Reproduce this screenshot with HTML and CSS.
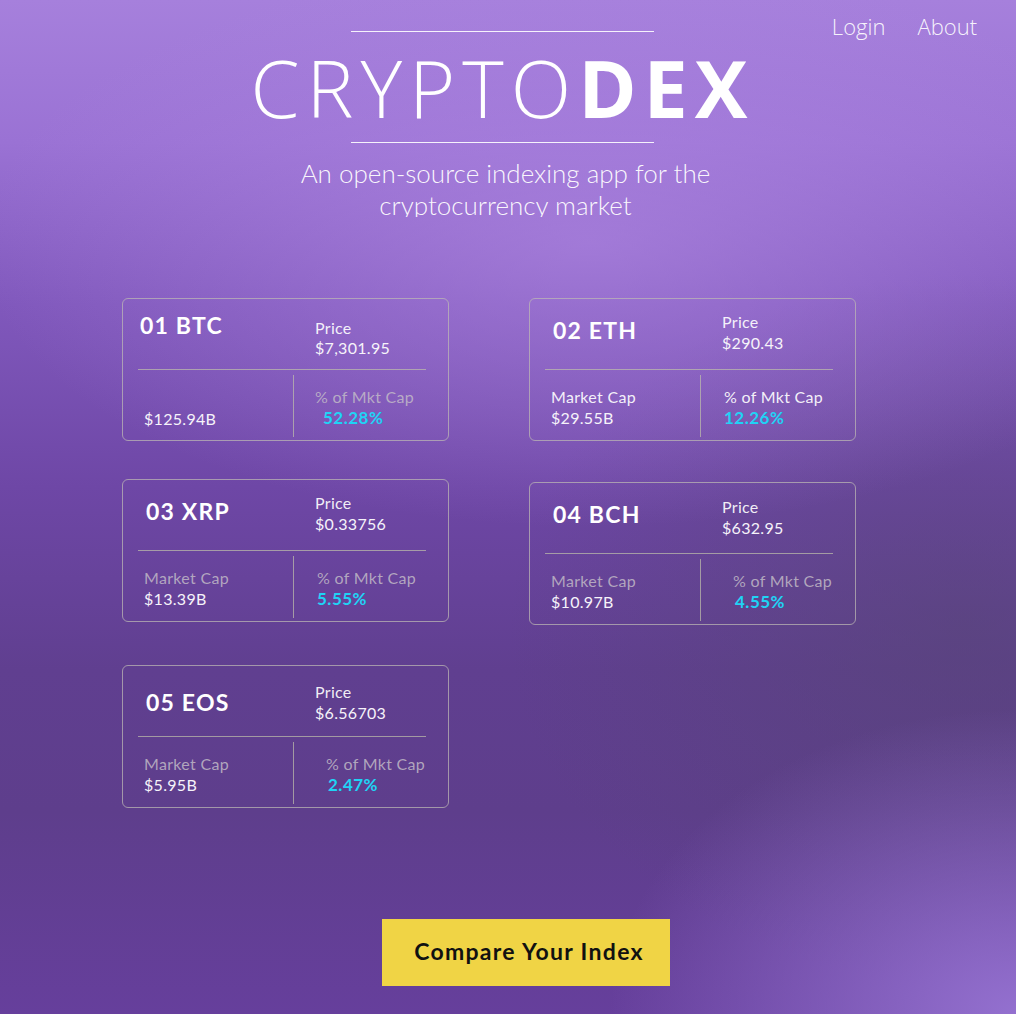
FILE: index.html
```html
<!DOCTYPE html>
<html lang="en">
<head>
<meta charset="utf-8">
<title>CryptoDex</title>
<link rel="stylesheet" href="styles.css">
</head>
<body>
<div class="page">
  <header class="top">
    <nav class="nav">
      <a class="nav-link" href="#">Login</a>
      <a class="nav-link" href="#">About</a>
    </nav>
    <div class="brand">
      <div class="rule"></div>
      <h1 class="logo"><span class="logo-light">CRYPTO</span><span class="logo-bold">DEX</span></h1>
      <div class="rule"></div>
      <p class="tagline">An open-source indexing app for the<br>cryptocurrency market</p>
    </div>
  </header>

  <main class="cards">
    <div class="card card--btc">
      <div class="card-top">
        <div class="sym">01 BTC</div>
        <div class="price"><div class="lbl">Price</div><div class="val">$7,301.95</div></div>
      </div>
      <div class="card-bottom">
        <div class="cell"><div class="lbl muted">&nbsp;</div><div class="val">$125.94B</div></div>
        <div class="cell cell-pct"><div class="lbl muted">% of Mkt Cap</div><div class="pct">52.28%</div></div>
      </div>
    </div>

    <div class="card card--eth">
      <div class="card-top">
        <div class="sym">02 ETH</div>
        <div class="price"><div class="lbl">Price</div><div class="val">$290.43</div></div>
      </div>
      <div class="card-bottom">
        <div class="cell"><div class="lbl">Market Cap</div><div class="val">$29.55B</div></div>
        <div class="cell cell-pct"><div class="lbl">% of Mkt Cap</div><div class="pct">12.26%</div></div>
      </div>
    </div>

    <div class="card card--xrp">
      <div class="card-top">
        <div class="sym">03 XRP</div>
        <div class="price"><div class="lbl">Price</div><div class="val">$0.33756</div></div>
      </div>
      <div class="card-bottom">
        <div class="cell"><div class="lbl muted">Market Cap</div><div class="val">$13.39B</div></div>
        <div class="cell cell-pct"><div class="lbl muted">% of Mkt Cap</div><div class="pct">5.55%</div></div>
      </div>
    </div>

    <div class="card card--bch">
      <div class="card-top">
        <div class="sym">04 BCH</div>
        <div class="price"><div class="lbl">Price</div><div class="val">$632.95</div></div>
      </div>
      <div class="card-bottom">
        <div class="cell"><div class="lbl muted">Market Cap</div><div class="val">$10.97B</div></div>
        <div class="cell cell-pct cell-pct--wide"><div class="lbl muted">% of Mkt Cap</div><div class="pct">4.55%</div></div>
      </div>
    </div>

    <div class="card card--eos">
      <div class="card-top">
        <div class="sym">05 EOS</div>
        <div class="price"><div class="lbl">Price</div><div class="val">$6.56703</div></div>
      </div>
      <div class="card-bottom">
        <div class="cell"><div class="lbl muted">Market Cap</div><div class="val">$5.95B</div></div>
        <div class="cell cell-pct cell-pct--wide"><div class="lbl muted">% of Mkt Cap</div><div class="pct">2.47%</div></div>
      </div>
    </div>
  </main>

  <footer class="actions">
    <button class="cta" type="button">Compare Your Index</button>
  </footer>
</div>
</body>
</html>
```
FILE: styles.css
```css
* { box-sizing: border-box; }

html, body {
  margin: 0;
  padding: 0;
  height: 100%;
}

body {
  overflow: hidden;
  font-family: Lato, "Open Sans", "Liberation Sans", sans-serif;
  color: #f4f1f8;
  background:
    radial-gradient(ellipse 40% 30% at 100% 100%, rgba(150, 115, 210, 0.95), rgba(150, 115, 210, 0) 100%),
    radial-gradient(ellipse 60% 28% at 58% 24%, rgba(178, 138, 228, 0.6), rgba(178, 138, 228, 0) 100%),
    radial-gradient(ellipse 45% 35% at 95% 62%, rgba(85, 70, 115, 0.55), rgba(85, 70, 115, 0) 100%),
    linear-gradient(180deg, #a680dc 0%, #9a72d4 14%, #8058bc 30%, #6e47a6 48%, #603f90 66%, #5e3e8c 80%, #663f9c 100%);
  background-color: #6a44a0;
}

.page {
  height: 1014px;
  display: flex;
  flex-direction: column;
}

/* ---------- header ---------- */
.top {
  display: grid;
}

.nav,
.brand {
  grid-area: 1 / 1;
}

.nav {
  justify-self: end;
  align-self: start;
  display: flex;
  gap: 32px;
  padding: 11px 39px 0 0;
  z-index: 1;
}

.nav-link {
  font-family: "Open Sans", sans-serif;
  font-weight: 300;
  font-size: 22px;
  line-height: 30px;
  color: rgba(255, 255, 255, 0.92);
  text-decoration: none;
}

.brand {
  display: flex;
  flex-direction: column;
  align-items: center;
  padding: 31px 12px 0 0;
}

.rule {
  width: 303px;
  height: 1px;
  background: rgba(255, 255, 255, 0.9);
}

.logo {
  margin: 16px 0 15px 1px;
  font-family: "Open Sans", sans-serif;
  font-size: 79px;
  line-height: 79px;
  letter-spacing: 7px;
  color: #ffffff;
  font-weight: 300;
}

.logo-light { font-weight: 300; }
.logo-bold { font-weight: 700; }

.tagline {
  margin: 14px 0 0 7px;
  height: 60px;
  overflow: hidden;
  font-family: Lato, sans-serif;
  font-weight: 300;
  font-size: 26px;
  line-height: 32px;
  text-align: center;
  color: rgba(255, 255, 255, 0.95);
}

/* ---------- cards ---------- */
.cards {
  display: grid;
  grid-template-columns: 327px 327px;
  column-gap: 80px;
  row-gap: 38px;
  align-items: start;
  margin: 81px 0 0 122px;
}

.card {
  height: 143px;
  border: 1px solid rgba(190, 186, 180, 0.72);
  border-radius: 6px;
  display: flex;
  flex-direction: column;
}

.card--bch { margin-top: 3px; }
.card--eos { margin-top: 2px; }

.card-top {
  height: 71px;
  margin: 0 22px 0 15px;
  border-bottom: 1px solid rgba(190, 190, 170, 0.72);
  display: grid;
  grid-template-columns: 177px 1fr;
}

.sym {
  padding: 17px 0 0 8px;
  font-weight: 700;
  font-size: 23px;
  line-height: 28px;
  letter-spacing: 1.2px;
  color: #ffffff;
}

.price {
  padding-top: 13px;
}

.lbl {
  font-size: 16px;
  line-height: 20px;
  letter-spacing: 0.3px;
  color: rgba(255, 255, 255, 0.92);
}

.lbl.muted {
  color: rgba(196, 190, 200, 0.82);
}

.val {
  font-size: 16px;
  line-height: 22px;
  letter-spacing: 0.3px;
  color: #f6f3fa;
}

.card-bottom {
  flex: 1;
  display: grid;
  grid-template-columns: 170px 1fr;
  padding: 5px 0 3px 0;
}

.cell {
  padding: 12px 0 0 21px;
}

.cell-pct {
  border-left: 1px solid rgba(190, 190, 170, 0.72);
  padding-left: 23px;
}

.cell-pct--wide {
  padding-left: 32px;
}

.cell-pct--wide .pct { padding-left: 2px; }

.pct {
  font-weight: 700;
  font-size: 17px;
  line-height: 22px;
  letter-spacing: 0.5px;
  color: #1fd3f5;
}

/* per-card fine tuning */
.card--btc .sym { padding: 12px 0 0 2px; }
.card--btc .price { padding-top: 19px; }
.card--btc .price .val { line-height: 20px; }
.card--btc .cell-pct { padding-left: 21px; }
.card--btc .cell-pct .pct { padding-left: 8px; }
.card--btc .cell .val { line-height: 24px; }

.card--eos .sym { padding-top: 22px; }
.card--eos .price { padding-top: 16px; }

.card--bch .price { padding-top: 14px; }

/* ---------- footer ---------- */
.actions {
  display: flex;
  justify-content: center;
  padding-left: 36px;
  margin-top: 111px;
}

.cta {
  width: 288px;
  height: 67px;
  padding: 0 0 3px 6px;
  border: none;
  border-radius: 0;
  background: #f0d445;
  color: #111111;
  font-family: Lato, sans-serif;
  font-weight: 700;
  font-size: 23px;
  letter-spacing: 1.3px;
  cursor: pointer;
}
```
